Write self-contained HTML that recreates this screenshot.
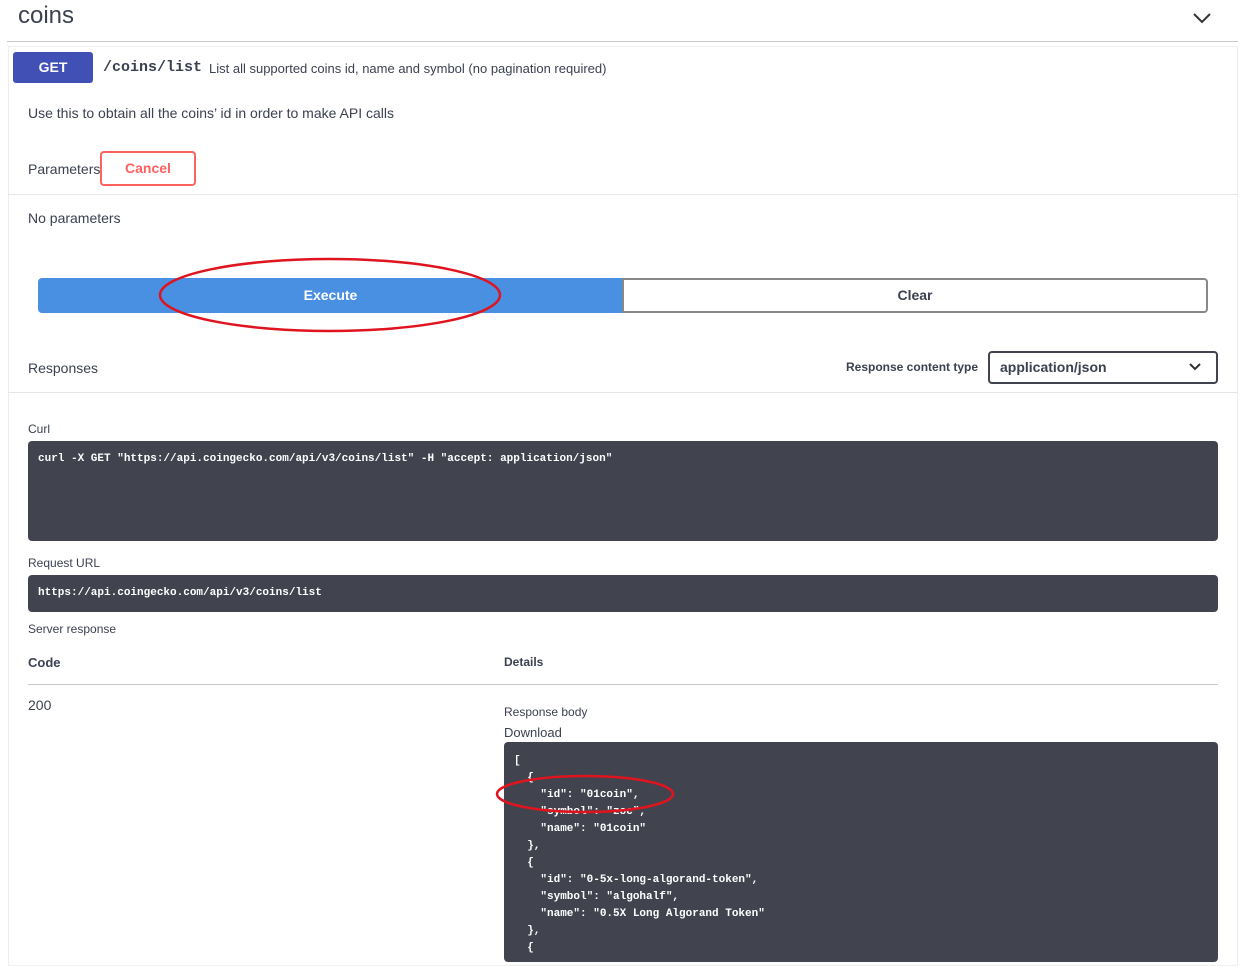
<html><head><style>
body{margin:0;width:1246px;height:951px;overflow:hidden;background:#fff;font-family:"Liberation Sans",sans-serif;color:#3b4151;position:relative}
.a{position:absolute}
.mono{font-family:"Liberation Mono",monospace;font-weight:bold}
.dark{background:#41444e;border-radius:4px;color:#fff;font-size:11px}
</style></head><body>
<div class="a" style="left:18px;top:2px;font-size:24px;color:#3b4151">coins</div>
<svg class="a" style="left:1192px;top:11px" width="20" height="14"><path d="M2 3 L10 11 L18 3" stroke="#333" stroke-width="2" fill="none"/></svg>
<div class="a" style="left:7px;top:41px;width:1231px;height:1px;background:#c8c8c8"></div>
<div class="a" style="left:8px;top:46px;width:1230px;height:920px;border:1px solid #eee;box-sizing:border-box"></div>
<div class="a" style="left:13px;top:52px;width:80px;height:31px;background:#4050b5;border-radius:3px;color:#fff;font-weight:bold;font-size:14px;line-height:31px;text-align:center">GET</div>
<div class="a mono" style="left:103px;top:59px;font-size:15px">/coins/list</div>
<div class="a" style="left:209px;top:61px;font-size:13px">List all supported coins id, name and symbol (no pagination required)</div>
<div class="a" style="left:28px;top:105px;font-size:14px">Use this to obtain all the coins’ id in order to make API calls</div>
<div class="a" style="left:28px;top:161px;font-size:14px">Parameters</div>
<div class="a" style="left:100px;top:151px;width:96px;height:35px;border:2px solid #ff6060;border-radius:4px;box-sizing:border-box;color:#ff6060;font-weight:bold;font-size:14px;line-height:31px;text-align:center">Cancel</div>
<div class="a" style="left:8px;top:194px;width:1230px;height:1px;background:#e6e6e6"></div>
<div class="a" style="left:28px;top:210px;font-size:14px">No parameters</div>
<div class="a" style="left:38px;top:278px;width:585px;height:35px;background:#4990e2;border-radius:4px 0 0 4px;color:#fff;font-weight:bold;font-size:14px;line-height:35px;text-align:center">Execute</div>
<div class="a" style="left:622px;top:278px;width:586px;height:35px;border:2px solid #888;border-radius:0 4px 4px 0;box-sizing:border-box;font-weight:bold;font-size:14px;line-height:31px;text-align:center">Clear</div>
<svg class="a" style="left:155px;top:255px" width="355" height="85"><ellipse cx="175" cy="40" rx="170" ry="36" stroke="#e0141e" stroke-width="2.5" fill="none"/></svg>
<div class="a" style="left:28px;top:360px;font-size:14px">Responses</div>
<div class="a" style="left:846px;top:360px;font-size:12px;font-weight:bold">Response content type</div>
<div class="a" style="left:988px;top:351px;width:230px;height:33px;border:2px solid #41444e;border-radius:4px;box-sizing:border-box;font-weight:bold;font-size:14px;line-height:29px;padding-left:10px">application/json</div>
<svg class="a" style="left:1188px;top:362px" width="14" height="10"><path d="M2 2 L7 7 L12 2" stroke="#333" stroke-width="2" fill="none"/></svg>
<div class="a" style="left:8px;top:392px;width:1230px;height:1px;background:#e6e6e6"></div>
<div class="a" style="left:28px;top:422px;font-size:12px">Curl</div>
<div class="a dark mono" style="left:28px;top:441px;width:1190px;height:100px;padding:12px 10px;box-sizing:border-box">curl -X GET "https://api.coingecko.com/api/v3/coins/list" -H "accept: application/json"</div>
<div class="a" style="left:28px;top:556px;font-size:12px">Request URL</div>
<div class="a dark mono" style="left:28px;top:575px;width:1190px;height:37px;padding:12px 10px;box-sizing:border-box">https://api.coingecko.com/api/v3/coins/list</div>
<div class="a" style="left:28px;top:622px;font-size:12px">Server response</div>
<div class="a" style="left:28px;top:655px;font-size:13px;font-weight:bold">Code</div>
<div class="a" style="left:504px;top:655px;font-size:12px;font-weight:bold">Details</div>
<div class="a" style="left:28px;top:684px;width:1190px;height:1px;background:#c8c8c8"></div>
<div class="a" style="left:28px;top:697px;font-size:14px">200</div>
<div class="a" style="left:504px;top:705px;font-size:12px">Response body</div>
<div class="a" style="left:504px;top:725px;font-size:13px">Download</div>
<pre class="a dark mono" style="left:504px;top:742px;width:714px;height:220px;margin:0;padding:11px 10px;box-sizing:border-box;line-height:17px">[
  {
    "id": "01coin",
    "symbol": "zoc",
    "name": "01coin"
  },
  {
    "id": "0-5x-long-algorand-token",
    "symbol": "algohalf",
    "name": "0.5X Long Algorand Token"
  },
  {</pre>
<svg class="a" style="left:494px;top:770px" width="185" height="50"><ellipse cx="91" cy="24" rx="88" ry="18" stroke="#e0141e" stroke-width="2.5" fill="none"/></svg>
</body></html>
